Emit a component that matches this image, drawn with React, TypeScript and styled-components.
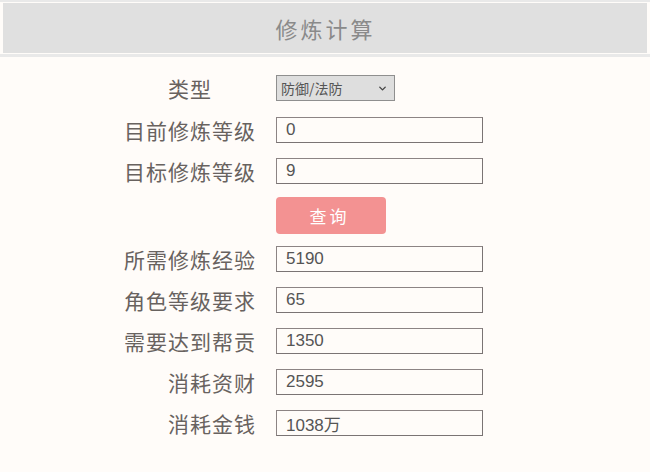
import React from 'react';
import styled, { createGlobalStyle } from 'styled-components';
import { ChevronDown } from 'lucide-react';

const GlobalStyle = createGlobalStyle`
  html, body {
    margin: 0;
    padding: 0;
    background: #fffcf9;
  }
  * {
    box-sizing: border-box;
  }
`;

const Page = styled.div`
  width: 650px;
  min-height: 472px;
  background: #fffcf9;
  font-family: 'Liberation Sans', 'Noto Sans CJK SC', sans-serif;
`;

const HeaderWrap = styled.div`
  border-top: 2px solid #e9e9e9;
  border-bottom: 3px solid #e9e9e9;
  padding: 1px 3px;
`;

const HeaderBand = styled.h1`
  margin: 0;
  height: 50px;
  background: #e0e0e0;
  display: flex;
  align-items: center;
  justify-content: center;
  font-family: 'Noto Sans CJK SC', sans-serif;
  font-weight: 400;
  font-size: 22px;
  letter-spacing: 3px;
  padding-left: 1px;
  color: #8a8a8a;
`;

const Form = styled.div`
  display: flex;
  flex-direction: column;
`;

const FieldRow = styled.div<{ $top: number }>`
  display: grid;
  grid-template-columns: 256px 207px;
  column-gap: 20px;
  align-items: center;
  margin-top: ${(p) => p.$top}px;
`;

const Label = styled.label<{ $indent?: number }>`
  text-align: right;
  padding-right: ${(p) => p.$indent ?? 0}px;
  font-family: 'Noto Sans CJK SC', sans-serif;
  font-size: 21px;
  letter-spacing: 1px;
  color: #68625f;
  line-height: 26px;
`;

const Field = styled.input`
  width: 207px;
  height: 26px;
  border: 1px solid #8c8484;
  border-right-color: #7a7474;
  border-bottom-color: #7a7474;
  background: #fffcf9;
  padding: 0 0 0 9px;
  font-family: 'Liberation Sans', 'Noto Sans CJK SC', sans-serif;
  font-size: 17px;
  color: #555;
  outline: none;
`;

const SelectBox = styled.div`
  position: relative;
  width: 119px;
  height: 26px;
`;

const Select = styled.select`
  appearance: none;
  width: 100%;
  height: 100%;
  border: 1px solid #8f8f8f;
  background: #dedede;
  padding: 0 0 0 4px;
  font-family: 'Noto Sans CJK SC', sans-serif;
  font-size: 14px;
  color: #555;
  outline: none;
`;

const Chevron = styled.span`
  position: absolute;
  right: 7px;
  top: 8px;
  display: flex;
  color: #444;
  pointer-events: none;
`;

const Button = styled.button`
  width: 110px;
  height: 37px;
  border: none;
  border-radius: 4px;
  background: #f39292;
  color: #fff;
  font-family: 'Noto Sans CJK SC', sans-serif;
  font-size: 17px;
  letter-spacing: 3px;
  padding-left: 3px;
  cursor: pointer;
`;

const results = [
  { label: '所需修炼经验', value: '5190', top: 12 },
  { label: '角色等级要求', value: '65', top: 15 },
  { label: '需要达到帮贡', value: '1350', top: 15 },
  { label: '消耗资财', value: '2595', top: 15 },
  { label: '消耗金钱', value: '1038万', top: 15 },
];

const App: React.FC = () => {
  return (
    <Page>
      <GlobalStyle />
      <HeaderWrap>
        <HeaderBand>修炼计算</HeaderBand>
      </HeaderWrap>
      <Form>
        <FieldRow $top={18}>
          <Label $indent={44}>类型</Label>
          <SelectBox>
            <Select defaultValue="def">
              <option value="def">防御/法防</option>
              <option value="atk">攻击/法术</option>
            </Select>
            <Chevron>
              <ChevronDown size={11} strokeWidth={3} />
            </Chevron>
          </SelectBox>
        </FieldRow>
        <FieldRow $top={16}>
          <Label>目前修炼等级</Label>
          <Field defaultValue="0" />
        </FieldRow>
        <FieldRow $top={15}>
          <Label>目标修炼等级</Label>
          <Field defaultValue="9" />
        </FieldRow>
        <FieldRow $top={13}>
          <span />
          <Button>查询</Button>
        </FieldRow>
        {results.map((r) => (
          <FieldRow key={r.label} $top={r.top}>
            <Label>{r.label}</Label>
            <Field defaultValue={r.value} readOnly />
          </FieldRow>
        ))}
      </Form>
    </Page>
  );
};

export default App;
